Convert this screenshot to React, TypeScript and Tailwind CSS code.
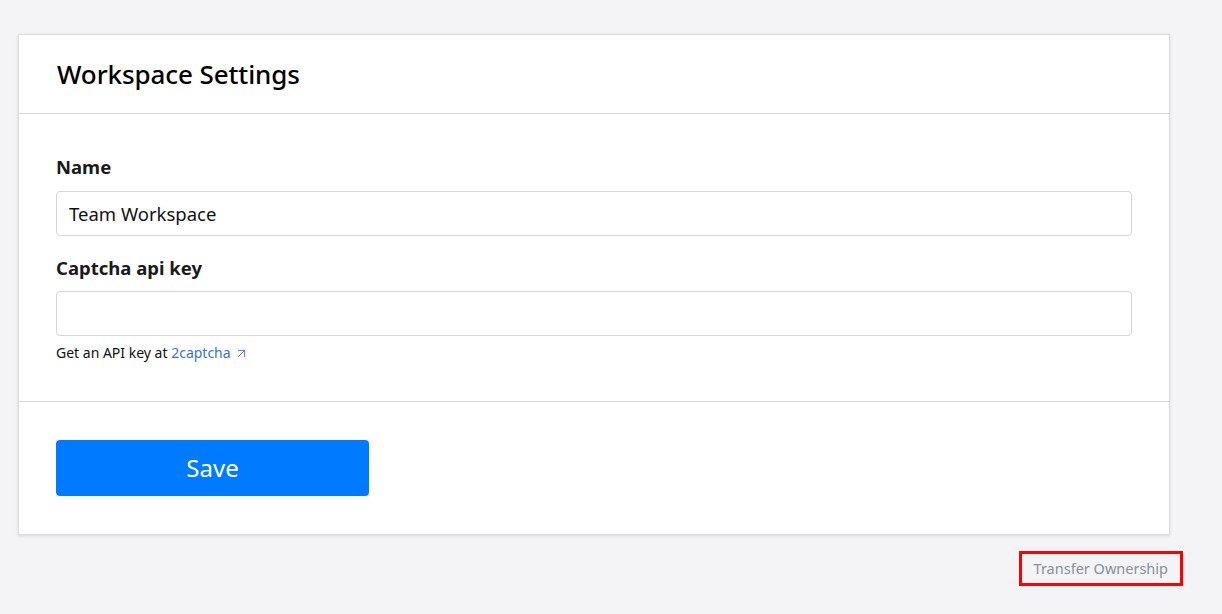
import { ArrowUpRight } from 'lucide-react';

export default function App() {
  return (
    <div
      className="min-h-[614px] w-full bg-[#f4f4f6] pt-[34px] pl-[18px] pr-[52px]"
      style={{ fontFamily: '"Noto Sans", "Open Sans", sans-serif' }}
    >
      {/* Settings card */}
      <div className="w-[1152px] bg-white border border-[#dcdcdc] shadow-[0_1px_3px_rgba(0,0,0,0.12)]">
        <div className="h-[79px] flex items-center px-[38px] border-b border-[#d9d9d9]">
          <h1 className="text-[26px] font-medium text-black tracking-[-0.1px]">Workspace Settings</h1>
        </div>

        <div className="px-[37px] pt-[41px] pb-[38px] border-b border-[#d9d9d9]">
          <label className="block text-[18.5px] font-bold text-[#1a1a1a] leading-[24px]">Name</label>
          <input
            defaultValue="Team Workspace"
            className="mt-[12px] w-full h-[45px] rounded-[4px] border border-[#d6d6d6] px-[12px] text-[18.5px] text-[#111] outline-none"
          />
          <label className="block mt-[20px] text-[18.5px] font-bold text-[#1a1a1a] leading-[24px]">Captcha api key</label>
          <input className="mt-[11px] w-full h-[45px] rounded-[4px] border border-[#d6d6d6] px-[12px] text-[18px] outline-none" />
          <p className="mt-[7px] text-[14px] text-[#111] leading-[20px]">
            Get an API key at{' '}
            <a className="text-[#3b6fd8] inline-flex items-center gap-[3px]">
              2captcha
              <ArrowUpRight className="w-[15px] h-[15px]" strokeWidth={1.5} />
            </a>
          </p>
        </div>

        <div className="px-[37px] pt-[38px] pb-[38px]">
          <button className="w-[313px] h-[56px] rounded-[4px] bg-[#007bff] text-white text-[24px]">Save</button>
        </div>
      </div>

      <div className="w-[1165px] flex justify-end mt-[16px]">
        <button className="h-[35px] px-[12px] border-[3px] border-[#ff0000] text-[14.5px] text-[#8a8f99]">
          Transfer Ownership
        </button>
      </div>
    </div>
  );
}
